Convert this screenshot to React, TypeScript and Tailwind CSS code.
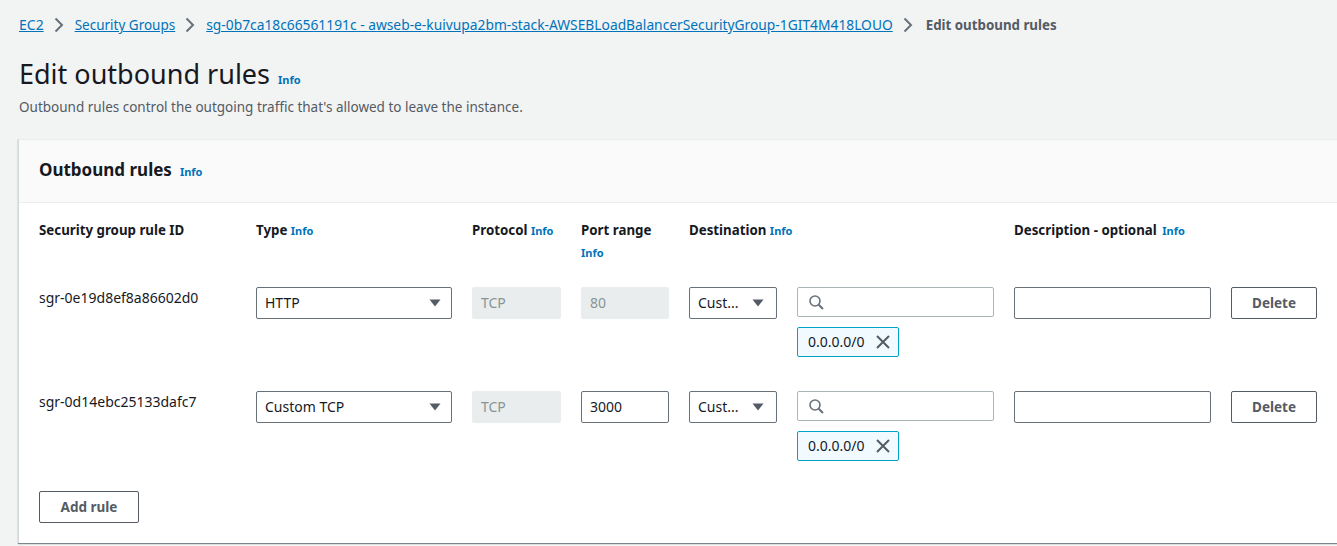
import React from 'react'

const Info = ({ className = '' }: { className?: string }) => (
  <span className={`text-[11px] font-bold text-[#0073bb] ${className}`}>Info</span>
)

const Chevron = () => (
  <svg width="10" height="16" viewBox="0 0 10 16" fill="none" className="ml-[10px] mr-[11px] mt-[2px] shrink-0 self-start">
    <path d="M1.5 1.5L8 8l-6.5 6.5" stroke="#687078" strokeWidth="2" />
  </svg>
)

const Caret = () => (
  <svg width="12" height="8" viewBox="0 0 12 8" className="shrink-0">
    <path d="M0.5 0.5h11L6 7.5z" fill="#545b64" />
  </svg>
)

const Select = ({ value, compact }: { value: string; compact?: boolean }) => (
  <div
    className={`flex h-8 items-center justify-between rounded-[2px] border border-[#687078] bg-white pl-2 text-sm text-[#16191f] ${
      compact ? 'pr-3' : 'pr-[10px]'
    }`}
  >
    <span>{value}</span>
    <Caret />
  </div>
)

const Disabled = ({ value }: { value: string }) => (
  <div className="flex h-8 items-center rounded-[2px] bg-[#eaeded] pl-[9px] text-sm text-[#879596]">{value}</div>
)

const Button = ({ label, className = '' }: { label: string; className?: string }) => (
  <div
    className={`flex h-8 items-center justify-center rounded-[2px] border border-[#545b64] bg-white text-[13.5px] font-bold text-[#545b64] ${className}`}
  >
    {label}
  </div>
)

const Destination = () => (
  <div>
    <div className="flex h-[30px] items-center rounded-[2px] border border-[#aab7b8] bg-white pl-[10px]">
      <svg width="16" height="16" viewBox="0 0 16 16" fill="none">
        <circle cx="7" cy="7" r="5" stroke="#687078" strokeWidth="1.6" />
        <path d="M10.7 10.7L15 15" stroke="#687078" strokeWidth="2" />
      </svg>
    </div>
    <div className="mt-[10px] flex h-[30px] w-[102px] items-center rounded-[2px] border border-[#00a1c9] bg-[#f1faff] pl-[10px] text-sm text-[#16191f]">
      0.0.0.0/0
      <svg width="16" height="16" viewBox="0 0 16 16" fill="none" className="ml-[10px]">
        <path d="M2 2l12 12M14 2L2 14" stroke="#545b64" strokeWidth="2" />
      </svg>
    </div>
  </div>
)

const Row = ({ id, type, port }: { id: string; type: string; port?: string }) => (
  <div className="grid grid-cols-[197px_196px_89px_88px_88px_197px_197px_86px] gap-x-5">
    <div className="pt-[1px] text-[14px] leading-5 text-[#16191f]">{id}</div>
    <Select value={type} />
    <Disabled value="TCP" />
    {port ? (
      <Disabled value={port} />
    ) : (
      <div className="flex h-8 items-center rounded-[2px] border border-[#687078] bg-white pl-2 text-sm text-[#16191f]">
        3000
      </div>
    )}
    <Select value="Cust..." compact />
    <Destination />
    <div className="h-8 rounded-[2px] border border-[#687078] bg-white" />
    <Button label="Delete" />
  </div>
)

const App = () => {
  return (
    <div className="h-[546px] w-[1337px] overflow-hidden bg-[#f2f3f3] font-['Noto_Sans',sans-serif]">
      <div className="flex h-[48px] items-baseline pl-[19px] pt-[15px] text-[14px] leading-5 text-[#545b64]">
        <span className="text-[#0073bb] underline">EC2</span>
        <Chevron />
        <span className="text-[13.5px] text-[#0073bb] underline">Security Groups</span>
        <Chevron />
        <span className="text-[13.8px] text-[#0073bb] underline">
          sg-0b7ca18c66561191c - awseb-e-kuivupa2bm-stack-AWSEBLoadBalancerSecurityGroup-1GIT4M418LOUO
        </span>
        <Chevron />
        <span className="ml-[2px] text-[13.3px] font-bold">Edit outbound rules</span>
      </div>

      <div className="pl-[19px] pt-[8px]">
        <div className="flex items-baseline gap-2">
          <h1 className="text-[27px] leading-9 text-[#16191f]">Edit outbound rules</h1>
          <Info />
        </div>
        <p className="mt-[5px] text-[13.5px] leading-5 text-[#545b64]">
          Outbound rules control the outgoing traffic that's allowed to leave the instance.
        </p>
      </div>

      <div className="ml-[18px] mt-[22px] h-[404px] w-[1340px] border-l border-[#d5dbdb] bg-white shadow-[0_1px_1px_0_rgba(0,28,36,0.5)]">
        <div className="flex h-[64px] items-center gap-2 border-y border-[#eaeded] bg-[#fafafa] pl-5">
          <h2 className="-mt-[2px] text-[17px] font-bold text-[#16191f]">Outbound rules</h2>
          <Info className="mt-[3px]" />
        </div>

        <div className="pl-5 pt-[17px]">
          <div className="grid h-[67px] grid-cols-[197px_196px_89px_88px_88px_197px_197px_86px] gap-x-5 text-[13.3px] font-bold leading-5 text-[#16191f]">
            <div>Security group rule ID</div>
            <div>
              Type <Info />
            </div>
            <div>
              Protocol <Info />
            </div>
            <div>
              Port range
              <div className="mt-[2px]">
                <Info />
              </div>
            </div>
            <div className="col-span-2">
              Destination <Info />
            </div>
            <div className="col-span-2">
              Description - optional <Info className="ml-0.5" />
            </div>
          </div>

          <Row id="sgr-0e19d8ef8a86602d0" type="HTTP" port="80" />
          <div className="h-[34px]" />
          <Row id="sgr-0d14ebc25133dafc7" type="Custom TCP" />

          <Button label="Add rule" className="mt-[30px] w-[100px]" />
        </div>
      </div>
    </div>
  )
}

export default App
